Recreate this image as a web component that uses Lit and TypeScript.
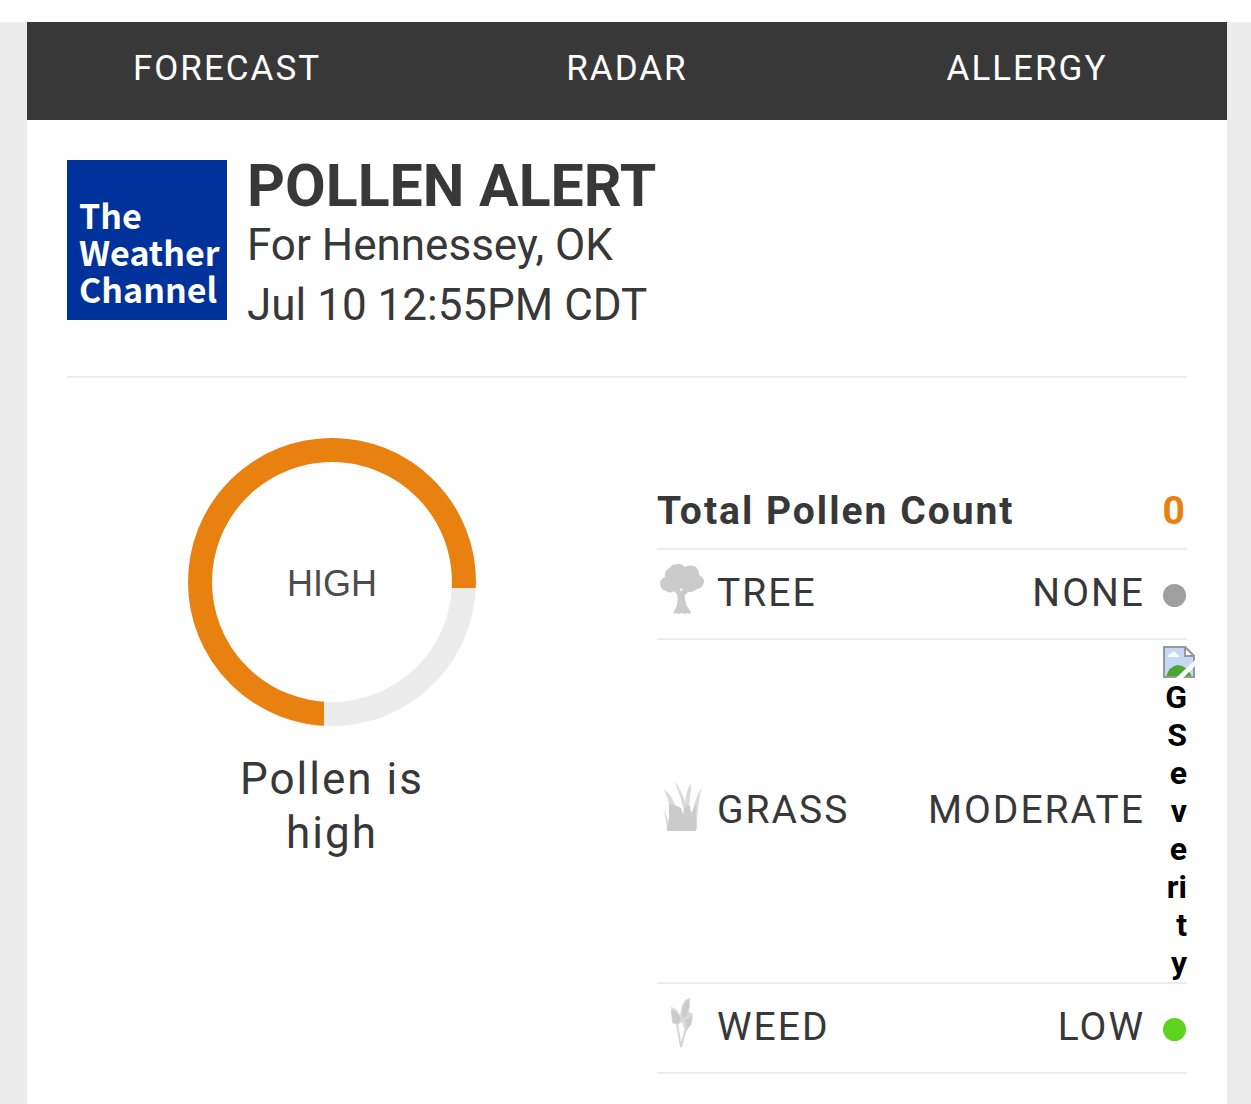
import { LitElement, html, css, svg } from "lit";
import { customElement } from "lit/decorators.js";

const treeIcon = svg`
  <path d="M17 1 Q23 -2 28 3 Q34 0 39 3 Q43 7 42 11 Q47 13 47 18 Q46 24 40 25 Q36 29 31 28 L28 31 Q27 40 34 48 L33 50 L30 49 L28 50 L25 49 L21 50 L19 49 L16 50 L17 47 Q22 40 20 30 L17 27 Q13 30 9 27 Q4 26 3 20 Q3 15 8 13 Q7 6 13 4 Q14 1 17 0Z M24 24 L23 26 L24 27 L26 26Z" fill-rule="evenodd"/>
`;

const grassIcon = svg`
  <path d="M17 0 Q25 9 29 24 L27 32 Q24 14 17 0Z M28 25 Q28 11 34 2 Q34 12 32 26Z M7 8 Q15 15 18 24 L13 28 Q11 17 7 8Z M6 28 Q11 36 13 49 L10 49 Q9 36 6 28Z M45 6 Q40 22 40 49 L34 40 Q37 17 45 6Z" fill="#dadada"/>
  <path d="M10 50 L12 36 L12 23 L18 24 L24 27 L26 33 L29 24 L33 25 L34 32 L39 24 L39 50Z"/>
`;

const weedIcon = svg`
  <path d="M14 9 L19 11 L23 17 L25 7 L28 2 L33 0 L33 6 L32 14 L36 16 L35 25 L30 33 L27 30 L25 24 L21 27 L15 25Z" fill="#dadada"/>
  <path d="M14 12 L20 14 L24 21 L21 26 L16 25Z M26 8 L31 1 L32 9 L30 17 L27 21 L25 16Z M28 22 L35 18 L34 26 L30 31Z"/>
  <path d="M20 26 L24 49 M29 30 L24 49" fill="none" stroke="#d4d4d4" stroke-width="2"/>
`;

@customElement("app-root")
export class AppRoot extends LitElement {
  static styles = css`
    :host {
      display: block;
      box-sizing: border-box;
      min-height: 100vh;
      padding-top: 22px;
      background: linear-gradient(#fff 22px, #ececec 22px);
      color: #383838;
      font-family: Roboto, "Liberation Sans", sans-serif;
    }
    .card {
      box-sizing: border-box;
      min-height: calc(100vh - 22px);
      margin: 0 24px 0 27px;
      background: #fff;
    }
    .nav {
      display: grid;
      grid-template-columns: repeat(3, 1fr);
      background: #383838;
      text-align: center;
      font-size: 35px;
      line-height: 42px;
      letter-spacing: 2px;
      padding: 26px 0 30px;
    }
    .nav a {
      color: #fff;
      text-decoration: none;
    }
    .content {
      padding: 40px;
    }
    .head {
      display: flex;
      gap: 20px;
      padding-bottom: 41px;
      border-bottom: 2px solid #ececec;
    }
    .logo {
      box-sizing: border-box;
      flex: none;
      width: 160px;
      height: 160px;
      padding: 36px 0 0 12px;
      background: #00329b;
      color: #fff;
      font: bold 34px/37px "Noto Sans CJK SC", sans-serif;
      white-space: nowrap;
    }
    .title {
      margin: 0 0 3px;
      font-size: 59px;
      line-height: 52px;
    }
    .sub {
      margin: 0;
      font-size: 44px;
      line-height: 60px;
    }
    .body {
      display: grid;
      grid-template-columns: 1fr 1fr;
      gap: 60px;
      padding-top: 60px;
      align-items: start;
    }
    .gauge {
      display: flex;
      flex-direction: column;
      align-items: center;
      gap: 26px;
    }
    .ring {
      display: block;
      width: 288px;
      height: 288px;
    }
    .level {
      font: 36px "Liberation Sans", sans-serif;
      fill: #4d4d4d;
      text-anchor: middle;
    }
    .note {
      margin: 0;
      max-width: 240px;
      text-align: center;
      font-size: 44px;
      line-height: 54px;
      letter-spacing: 2px;
    }
    .counts {
      width: 100%;
      margin-top: 22px;
      table-layout: fixed;
      border-collapse: separate;
      border-spacing: 0;
      font-size: 39px;
      line-height: 48px;
      letter-spacing: 2px;
    }
    .counts th,
    .counts td {
      box-sizing: border-box;
      height: 90px;
      padding: 0 0 2px;
      border-bottom: 2px solid #ececec;
      vertical-align: middle;
      text-align: left;
      font-weight: normal;
    }
    .counts .total {
      padding-bottom: 13px;
      vertical-align: bottom;
      font-weight: bold;
    }
    .counts .number {
      color: #e8810f;
      text-align: right;
    }
    .counts .picture {
      padding-bottom: 10px;
    }
    .counts .value {
      text-align: right;
    }
    .counts .status {
      padding: 2px 0 0;
    }
    .col-icon {
      width: 60px;
    }
    .col-name {
      width: 160px;
    }
    .col-status {
      width: 42px;
    }
    .icon {
      display: block;
      width: 50px;
      height: 50px;
      fill: #cbcbcb;
    }
    .dot {
      width: 23px;
      height: 23px;
      margin-left: 18px;
      border-radius: 50%;
      background: #9f9f9f;
    }
    .dot.low {
      background: #5dd31f;
    }
    .counts .status.missing {
      padding: 0 0 0 18px;
      color: #000;
      font-size: 32px;
      font-weight: bold;
      line-height: 38px;
      letter-spacing: 0;
      text-align: right;
      word-break: break-all;
    }
    .broken {
      width: 32px;
      height: 32px;
      vertical-align: bottom;
    }
  `;

  private renderDot(level: string) {
    return html`<td class="status"><div class="dot ${level}"></div></td>`;
  }

  private renderMissing() {
    return html`<td class="status missing"><svg class="broken" viewBox="0 0 32 32" aria-hidden="true">
      <path d="M1 1H22L31 10V31H1Z" fill="#fff"/>
      <path d="M2 2H21V11H30V30H2Z" fill="#c5d8f5"/>
      <path d="M5 11Q5 8 8 8Q9 5 12 6Q14 7 14 9Q17 9 16 11Z" fill="#fff"/>
      <path d="M3 31Q6 20 15 19Q25 20 29 31Z" fill="#4ca72e"/>
      <path d="M1 1H22L31 10V31H1Z" fill="none" stroke="#989898" stroke-width="2"/>
      <path d="M22 1V10H31Z" fill="#fff" stroke="#989898" stroke-width="2"/>
      <path d="M13 32L32 14V20L20 32Z" fill="#fff"/>
    </svg>G Severity</td>`;
  }

  private renderRow(icon: unknown, name: string, value: string, status: unknown) {
    return html`<tr>
      <td class="picture"><svg class="icon" viewBox="0 0 50 50" aria-hidden="true">${icon}</svg></td>
      <th scope="row">${name}</th>
      <td class="value">${value}</td>
      ${status}
    </tr>`;
  }

  render() {
    return html`
      <div class="card">
        <nav class="nav">
          <a href="#forecast">FORECAST</a>
          <a href="#radar">RADAR</a>
          <a href="#allergy">ALLERGY</a>
        </nav>
        <main class="content">
          <header class="head">
            <div class="logo">The<br />Weather<br />Channel</div>
            <div>
              <h1 class="title">POLLEN ALERT</h1>
              <p class="sub">For Hennessey, OK</p>
              <p class="sub">Jul 10 12:55PM CDT</p>
            </div>
          </header>
          <div class="body">
            <section class="gauge">
              <svg class="ring" viewBox="0 0 288 288">
                <clipPath id="filled"><path d="M0 0H288V150H136V288H0Z" /></clipPath>
                <circle cx="144" cy="144" r="132" fill="none" stroke="#ececec" stroke-width="24" />
                <circle cx="144" cy="144" r="132" fill="none" stroke="#e8810f" stroke-width="24" clip-path="url(#filled)" />
                <text class="level" x="144" y="158">HIGH</text>
              </svg>
              <p class="note">Pollen is high</p>
            </section>
            <table class="counts">
              <colgroup>
                <col class="col-icon" />
                <col class="col-name" />
                <col />
                <col class="col-status" />
              </colgroup>
              <thead>
                <tr>
                  <th class="total" scope="col" colspan="3">Total Pollen Count</th>
                  <td class="total number">0</td>
                </tr>
              </thead>
              <tbody>
                ${this.renderRow(treeIcon, "TREE", "NONE", this.renderDot("none"))}
                ${this.renderRow(grassIcon, "GRASS", "MODERATE", this.renderMissing())}
                ${this.renderRow(weedIcon, "WEED", "LOW", this.renderDot("low"))}
              </tbody>
            </table>
          </div>
        </main>
      </div>
    `;
  }
}
